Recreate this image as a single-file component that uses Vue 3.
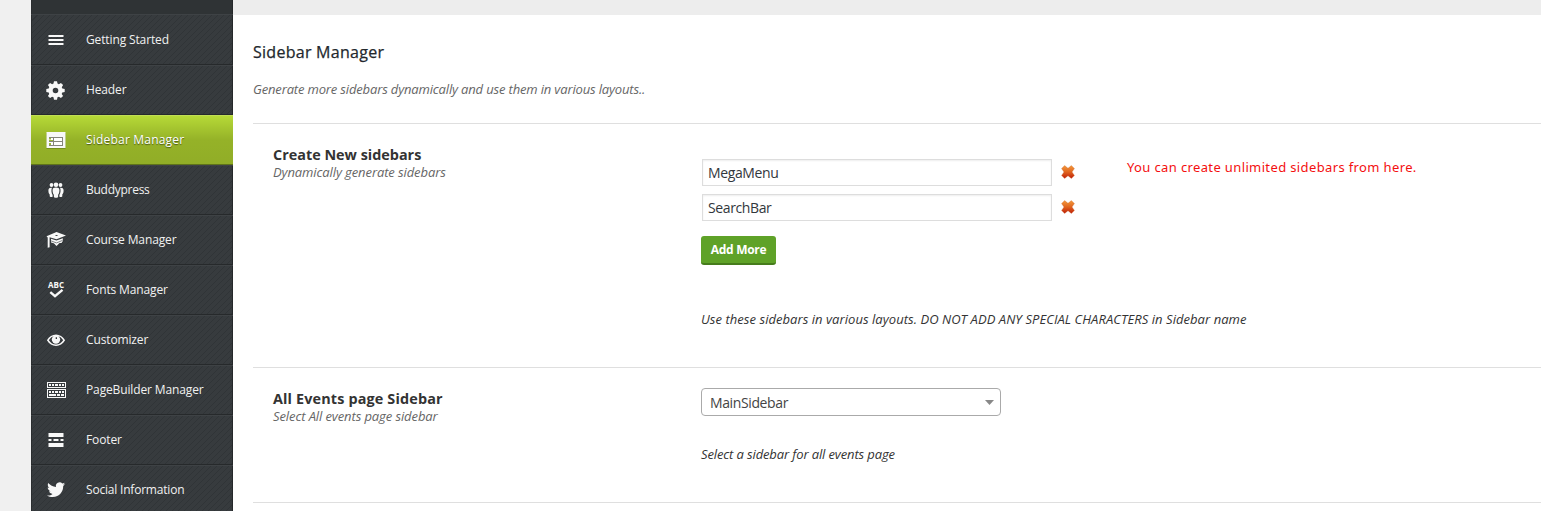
<script setup>
const items = [
  { icon: 'lines', label: 'Getting Started' },
  { icon: 'gear', label: 'Header' },
  { icon: 'panel', label: 'Sidebar Manager', active: true },
  { icon: 'group', label: 'Buddypress' },
  { icon: 'cap', label: 'Course Manager' },
  { icon: 'abc', label: 'Fonts Manager' },
  { icon: 'eye', label: 'Customizer' },
  { icon: 'keyboard', label: 'PageBuilder Manager' },
  { icon: 'footer', label: 'Footer' },
  { icon: 'bird', label: 'Social Information' },
]
const sidebars = ['MegaMenu', 'SearchBar']
</script>

<template>
  <div class="page">
    <nav class="menu">
      <div class="menu-top"></div>
      <a v-for="it in items" :key="it.label" class="item" :class="[it.icon, { active: it.active }]">
        <svg class="icon" width="20" height="20" viewBox="0 0 20 20" fill="#f8f8f8">
          <path v-if="it.icon === 'lines'" d="M2.500 5h15v2h-15zM2.500 9h15v2h-15zM2.500 13h15v2h-15z" />
          <template v-else-if="it.icon === 'gear'">
            <path fill-rule="evenodd" d="M8 1.200h3l.5 2.400 1.300.6 2.100-1.300 2.200 2.200-1.300 2.100.5 1.300 2.400.5v3l-2.400.5-.6 1.400 1.400 2-2.200 2.200-2-1.300-1.400.5-.5 2.400H8l-.5-2.400-1.400-.6-2 1.400-2.200-2.200 1.300-2-.5-1.400-2.400-.5V9l2.400-.5.6-1.400-1.400-2 2.200-2.200 2 1.300L7.500 3.600zM9.500 7.700a2.800 2.800 0 1 0 0 5.600 2.800 2.800 0 0 0 0-5.600z" />
          </template>
          <template v-else-if="it.icon === 'panel'">
            <path d="M.5 2h19v16h-19z" />
            <path fill="#85857c" d="M3 7h14v9H3z" />
            <path fill="#fff" d="M8 8h8v3H8zM8 12h8v3H8zM3 8h4v3H3zM3 12h4v3H3z" />
            <path fill="#9bb83a" d="M3 8h2v1.500H3zM3 10h4v1H3zM3 13h2v2H3z" />
          </template>
          <template v-else-if="it.icon === 'group'">
            <circle cx="5.500" cy="5" r="1.900" /><circle cx="14.500" cy="5" r="1.900" /><circle cx="10" cy="4.700" r="2.300" />
            <path d="M6.600 10c0-1.800 1.300-2.500 3.400-2.500s3.400.7 3.400 2.500c0 2.700-.5 3.900-1.300 4.700v2.100c0 .6-.9 1-2.100 1s-2.100-.4-2.100-1v-2.100C7.100 13.900 6.600 12.700 6.600 10z" />
            <path d="M5.900 7.700c-1.800-.3-3.500.4-3.500 2.500 0 2.300.5 3.500 1.300 4.200v1.800c0 .7 1.500 1 2.900.5v-1.800C5.500 13.500 5 10 5.900 7.700zM14.100 7.700c1.800-.3 3.500.4 3.500 2.500 0 2.300-.5 3.500-1.300 4.200v1.800c0 .7-1.500 1-2.900.5v-1.800c1.100-1.400 1.600-4.900.7-7.200z" />
          </template>
          <template v-else-if="it.icon === 'cap'">
            <path d="M10.500 1.900 20 5.600l-9.500 3.700-6.900-2v9.900l-1.900.6V7.500L.5 6.200z" />
            <path d="m5 8.800 5.500 1.800 6.300-2.400v2.700L15.500 13h-2l-3 3-2.700-2.700L5 12.400z" />
            <path fill="none" stroke="#35393c" stroke-width=".6" d="m5 10.900 5.500 2 6-2.500" />
            <path fill="#35393c" d="M9.500 5h2v.9h-2z" />
          </template>
          <template v-else-if="it.icon === 'abc'">
            <text x="2" y="8" class="abc-text" textLength="16" lengthAdjust="spacingAndGlyphs">ABC</text>
            <path fill="none" stroke="#f8f8f8" stroke-width="2.400" d="m4.300 12.200 4.700 4 7.500-6.300" />
          </template>
          <template v-else-if="it.icon === 'eye'">
            <path fill-rule="evenodd" d="M.9 10.300c2.200-3.700 5.500-5.800 9.100-5.800s6.900 2.100 9.100 5.800c-2.200 3.700-5.500 5.700-9.100 5.700S3.100 14 .9 10.300zm1.900 0c1.800 2.800 4.300 4.300 7.200 4.300s5.400-1.500 7.200-4.300c-1-1.700-2.200-2.900-3.600-3.600H6.400c-1.400.7-2.600 1.900-3.600 3.600z" />
            <circle cx="10" cy="9.600" r="4.200" />
            <path fill="#35393c" d="M9.700 7.200h1.300v1.700H9.700z" />
          </template>
          <template v-else-if="it.icon === 'keyboard'">
            <path fill-rule="evenodd" d="M1 2h19v6H1zM2 3v4h17V3zM1 9h19v9H1zM2 10v7h17v-7z" />
            <path d="M3 4h2v2H3zM6 4h2v2H6zM9 4h3v2H9zM13 4h2v2h-2zM16 4h2v2h-2zM3 11h2v2H3zM6 11h2v2H6zM9 11h3v2H9zM13 11h2v2h-2zM16 11h2v2h-2zM3 14h7v2H3zM11 14h3v2h-3zM15 14h3v2h-3z" />
          </template>
          <path v-else-if="it.icon === 'footer'" d="M2.500 3h15v4h-15zM2.500 9h3v2h-3zM7.500 9h5v2h-5zM14.500 9h3v2h-3zM2.500 13h15v4h-15z" />
          <path v-else d="M19 4.100c-.7.300-1.300.5-2 .6.800-.5 1.300-1.100 1.600-2-.7.400-1.500.7-2.300.9a3.700 3.700 0 0 0-6.300 3.400C6.900 6.900 4.200 5.400 2.300 3.100c-1 1.800-.5 3.800 1.100 4.900-.6 0-1.200-.2-1.700-.5 0 1.800 1.300 3.300 3 3.700-.6.200-1.100.2-1.700.1.500 1.500 1.800 2.500 3.500 2.600-1.600 1.300-3.500 1.800-5.500 1.500 1.700 1.100 3.600 1.700 5.700 1.700 6.900 0 10.700-5.900 10.500-11.100.7-.5 1.300-1.100 1.800-1.900z" />
        </svg>
        <span>{{ it.label }}</span>
      </a>
    </nav>

    <main class="content">
      <div class="strip"></div>
      <header class="intro">
        <h1>Sidebar Manager</h1>
        <p class="lead">Generate more sidebars dynamically and use them in various layouts..</p>
      </header>

      <section class="row first">
        <div class="heading">
          <h2 class="h-create">Create New sidebars</h2>
          <p class="s-create">Dynamically generate sidebars</p>
        </div>
        <div class="field">
          <div class="columns">
            <div class="inputs">
              <div v-for="name in sidebars" :key="name" class="line">
                <div class="input">{{ name }}</div>
                <svg class="remove" width="14" height="14" viewBox="0 0 14 14">
                  <defs>
                    <linearGradient id="fire" x1="0" y1="0" x2="0" y2="1">
                      <stop offset="0" stop-color="#f39a3c" />
                      <stop offset=".5" stop-color="#e0641f" />
                      <stop offset="1" stop-color="#bf1f08" />
                    </linearGradient>
                  </defs>
                  <path fill="url(#fire)" stroke="#c8622a" stroke-opacity=".55" stroke-width=".6" d="M3.600.6 7 3.300 10.400.6l3 3L11 7l2.400 3.400-3 3L7 10.700l-3.400 2.700-3-3L3 7 .6 3.600z" stroke-linejoin="round" />
                </svg>
              </div>
            </div>
            <p class="tip">You can create unlimited sidebars from here.</p>
          </div>
          <button class="add">Add More</button>
          <p class="note n-create">Use these sidebars in various layouts. DO NOT ADD ANY SPECIAL CHARACTERS in Sidebar name</p>
        </div>
      </section>

      <section class="row second">
        <div class="heading">
          <h2 class="h-events">All Events page Sidebar</h2>
          <p class="s-events">Select All events page sidebar</p>
        </div>
        <div class="field">
          <div class="select"><span>MainSidebar</span><svg width="9" height="5" viewBox="0 0 9 5"><path d="M0 0h9L4.500 5z" fill="#888" /></svg></div>
          <p class="note n-events">Select a sidebar for all events page</p>
        </div>
      </section>
      <div class="row last"></div>
    </main>
  </div>
</template>

<style>
body { margin: 0; background: #f0f0f0; overflow: hidden; }
</style>

<style scoped>
* { box-sizing: border-box; }
.page { display: flex; width: 1541px; height: 511px; overflow: hidden; padding-left: 31px; background: #f0f0f0; font-family: "Open Sans", "Noto Sans", sans-serif; color: #333; }
h1, h2, p { margin: 0; white-space: nowrap; }
.menu { flex: none; width: 202px; height: 511px; overflow: hidden; box-shadow: inset -1px 0 #25282a, inset 1px 0 #2a2d2f;
  background: repeating-linear-gradient(135deg, #373b3e 0 2.120px, #303437 2.120px 2.828px, #373b3e 2.828px 4.243px); }
.menu-top { height: 14px; background: #2f3335; box-shadow: inset -1px 0 #25282a, inset 1px 0 #2a2d2f; }
.item { display: flex; align-items: center; height: 50px; padding-left: 15px; border-top: 1px solid #3e4245; border-bottom: 1px solid #26292b; color: #f1f1f1; font-size: 12px; letter-spacing: -.13px; white-space: nowrap; }
.menu-top + .item { height: 51px; padding-top: 1px; }
.item span { margin-left: 20px; line-height: 18px; }
.group { letter-spacing: -.27px; }
.bird { letter-spacing: -.2px; }
.icon { flex: none; }
.active { color: #fff; letter-spacing: .2px; background: linear-gradient(#b6d937, #95b228 50%, #91ad27); border-top-color: #c1de54; border-bottom-color: #5f731a; text-shadow: 0 1px 1px rgba(0, 0, 0, .5); }
.active .icon { filter: drop-shadow(0 1px 0 #758e1c); }
.abc-text { font: 700 8px "Open Sans", sans-serif; letter-spacing: 0; }
.content { flex: 1; background: #fff; }
.strip { height: 15px; background: #ededed; }
.intro { height: 108px; padding: 26px 0 0 20px; }
h1 { font-size: 16px; line-height: 22px; font-weight: 500; letter-spacing: .27px; -webkit-text-stroke: .25px #23282d; color: #23282d; }
.lead { margin-top: 17px; font-size: 13px; line-height: 18px; font-style: italic; letter-spacing: -.155px; color: #666; }
.row { display: flex; margin-left: 20px; border-top: 1px solid #dfdfdf; }
.first { height: 244px; }
.second { height: 135px; }
.heading { width: 448px; padding: 21px 0 0 20px; }
h2 { font-size: 14.400px; line-height: 20px; font-weight: 700; color: #333; }
.h-events { letter-spacing: .15px; }
.heading p { margin-top: -2px; font-size: 13px; line-height: 18px; font-style: italic; letter-spacing: -.1px; color: #666; }
.columns { display: flex; padding: 35px 0 0 1px; }
.inputs { width: 425px; }
.line { display: flex; height: 35px; }
.input { width: 350px; height: 27px; padding: 0 5px; border: 1px solid #ddd; box-shadow: inset 0 1px 2px rgba(0, 0, 0, .07); font-size: 14px; line-height: 26px; letter-spacing: -.38px; color: #32373c; }
.remove { margin: 6px 0 0 9px; }
.tip { font: 13px/18px "Noto Sans", sans-serif; letter-spacing: .37px; color: #f40f0f; margin-top: -1px; }
.add { display: block; margin-top: 7px; width: 75px; height: 29px; padding: 0; border: 0; border-bottom: 2px solid #467c1c; border-radius: 3px; background: #5fa228; color: #fff; font: 700 12px/27px "Open Sans", sans-serif; letter-spacing: -.3px; white-space: nowrap; }
.note { font-size: 13px; line-height: 18px; font-style: italic; color: #333; }
.n-create { margin-top: 45px; letter-spacing: .05px; }
.select { display: flex; align-items: center; justify-content: space-between; margin-top: 20px; width: 300px; height: 28px; padding: 0 6px 0 8px; border: 1px solid #aaa; border-radius: 4px; font-size: 14px; letter-spacing: -.38px; color: #444; }
.select span { line-height: 20px; padding-top: 1px; }
.n-events { margin-top: 29px; letter-spacing: -.12px; }
</style>
